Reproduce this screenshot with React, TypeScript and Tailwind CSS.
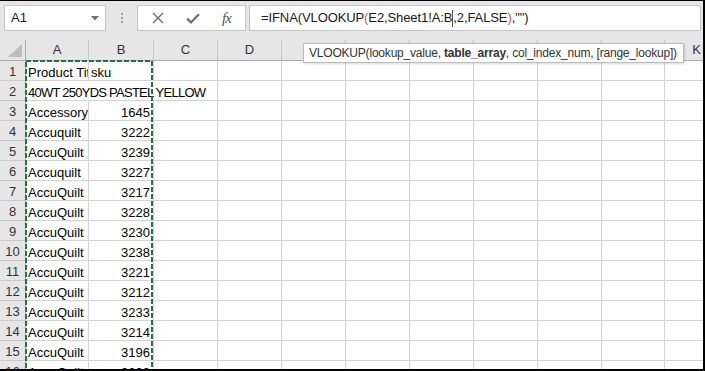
import { clsx as cn } from "clsx"

const cols = [
  { key: "A", w: "w-[63px]" },
  { key: "B", w: "w-[65px]" },
  { key: "C", w: "w-[64px]" },
  { key: "D", w: "w-[64px]" },
  { key: "E", w: "w-[64px]" },
  { key: "F", w: "w-[64px]" },
  { key: "G", w: "w-[64px]" },
  { key: "H", w: "w-[64px]" },
  { key: "I", w: "w-[64px]" },
  { key: "J", w: "w-[63px]" },
  { key: "K", w: "w-[64px]" },
]

const rows: [string, string][] = [
  ["Product Title", "sku"],
  ["40WT 250YDS PASTEL YELLOW", ""],
  ["Accessory", "1645"],
  ["Accuquilt", "3222"],
  ["AccuQuilt", "3239"],
  ["Accuquilt", "3227"],
  ["AccuQuilt", "3217"],
  ["AccuQuilt", "3228"],
  ["AccuQuilt", "3230"],
  ["AccuQuilt", "3238"],
  ["AccuQuilt", "3221"],
  ["AccuQuilt", "3212"],
  ["AccuQuilt", "3233"],
  ["AccuQuilt", "3214"],
  ["AccuQuilt", "3196"],
  ["AccuQuilt", "3209"],
]

function Toolbar() {
  return (
    <div className="flex h-[39px] shrink-0 items-start pt-[4px] text-[13px] text-[#1a1a1a]">
      {/* name box */}
      <div className="ml-[4px] flex h-[26px] w-[102px] items-center justify-between border border-[#c6c6c6] bg-white pl-[6px] pr-[6px]">
        <span>A1</span>
        <svg width="8" height="5" viewBox="0 0 8 5">
          <path d="M0 0 L8 0 L4 4.5 Z" fill="#6f6f6f" />
        </svg>
      </div>

      {/* grip dots */}
      <div className="ml-[15px] mt-[8px] flex w-[3px] flex-col gap-[2px]">
        <span className="h-[2px] w-[2px] bg-[#a0a0a0]" />
        <span className="h-[2px] w-[2px] bg-[#a0a0a0]" />
        <span className="h-[2px] w-[2px] bg-[#a0a0a0]" />
      </div>

      {/* cancel / enter / fx */}
      <div className="ml-[13px] flex h-[26px] w-[109px] items-center border border-[#c6c6c6] bg-white">
        <div className="flex w-[40px] justify-center">
          <svg width="12" height="12" viewBox="0 0 12 12">
            <path d="M1 1 L11 11 M11 1 L1 11" stroke="#6e6e6e" strokeWidth="1.4" />
          </svg>
        </div>
        <div className="flex w-[30px] justify-center">
          <svg width="14" height="11" viewBox="0 0 14 11">
            <path d="M1 5.5 L5 9.4 L13 1.2" stroke="#6e6e6e" strokeWidth="2.2" fill="none" />
          </svg>
        </div>
        <div className="flex w-[37px] justify-center font-['Liberation_Serif',serif] text-[15px] italic text-[#555]">
          <span className="tracking-[-1px]">fx</span>
        </div>
      </div>

      {/* formula */}
      <div className="ml-[3px] mr-[2px] flex h-[26px] flex-1 items-center border border-[#c6c6c6] bg-white pl-[11px] tracking-[-0.1px]">
        <span className="whitespace-pre">
          =IFNA(VLOOKUP<span className="text-[#dc5a24]">(</span>E2,Sheet1!A:B
        </span>
        <span className="h-[17px] w-px bg-[#555]" />
        <span className="whitespace-pre">
          ,2,FALSE<span className="text-[#dc5a24]">)</span>,"")
        </span>
      </div>
    </div>
  )
}

function HeaderRow() {
  return (
    <div className="flex h-[21px] shrink-0 border-b border-[#ababab] text-[13px] leading-[20px] text-[#333]">
      <div className="relative w-[26px] shrink-0 border-r border-[#ababab]">
        <svg className="absolute left-[8px] top-[4px]" width="14" height="14" viewBox="0 0 14 14">
          <path d="M14 0 L14 13 L0 13 Z" fill="#bdbdbd" />
        </svg>
      </div>
      {cols.map((c) => (
        <div key={c.key} className={cn(c.w, "shrink-0 border-r border-[#c8c8c8] text-center")}>
          {c.key}
        </div>
      ))}
    </div>
  )
}

function Row({ n, a, b }: { n: number; a: string; b: string }) {
  const spill = n === 2
  const numeric = /^\d+$/.test(b)
  return (
    <div className="flex h-[20px] shrink-0 text-[13px] leading-[15px]">
      <div className="w-[26px] shrink-0 border-b border-r border-b-[#c8c8c8] border-r-[#ababab] bg-[#e6e6e6] pt-[3px] text-center text-[#333]">
        {n}
      </div>
      <div
        className={cn(
          "w-[63px] shrink-0 whitespace-nowrap border-b border-[#d4d4d4] pl-[2px] pt-[4px]",
          spill ? "overflow-visible tracking-[-0.75px]" : "overflow-hidden border-r"
        )}
      >
        {a}
      </div>
      <div
        className={cn(
          "w-[65px] shrink-0 overflow-hidden whitespace-nowrap border-b border-[#d4d4d4] pt-[4px]",
          spill ? "" : "border-r",
          numeric ? "pr-[3px] text-right" : "pl-[2px]"
        )}
      >
        {b}
      </div>
      {cols.slice(2).map((c) => (
        <div key={c.key} className={cn(c.w, "shrink-0 border-b border-r border-[#d4d4d4]")} />
      ))}
    </div>
  )
}

export default function App() {
  return (
    <div className="relative flex h-[371px] w-[705px] flex-col overflow-hidden border-b-2 border-r-2 border-t border-black bg-[#e6e6e6] font-['Liberation_Sans',Arial,sans-serif]">
      <Toolbar />

      <div className="relative flex flex-1 flex-col overflow-hidden">
        <HeaderRow />
        <div className="flex flex-col bg-white">
          {rows.map(([a, b], i) => (
            <Row key={i} n={i + 1} a={a} b={b} />
          ))}
        </div>

        {/* copy marquee around A:B */}
        <svg className="pointer-events-none absolute left-[25px] top-[20px]" width="129" height="340">
          <rect x="1" y="1" width="126" height="360" fill="none" stroke="#217346" strokeWidth="2" strokeDasharray="5 2" />
        </svg>
      </div>

      {/* function argument tooltip */}
      <div className="absolute left-[303px] top-[42px] flex h-[20px] w-[381px] items-center whitespace-pre border border-[#bcbcbc] bg-white pl-[5px] text-[12px] tracking-[-0.2px] text-[#333] shadow-[1px_1px_2px_rgba(0,0,0,0.15)]">
        VLOOKUP(lookup_value, <b className="font-bold">table_array</b>, col_index_num, [range_lookup])
      </div>
    </div>
  )
}
